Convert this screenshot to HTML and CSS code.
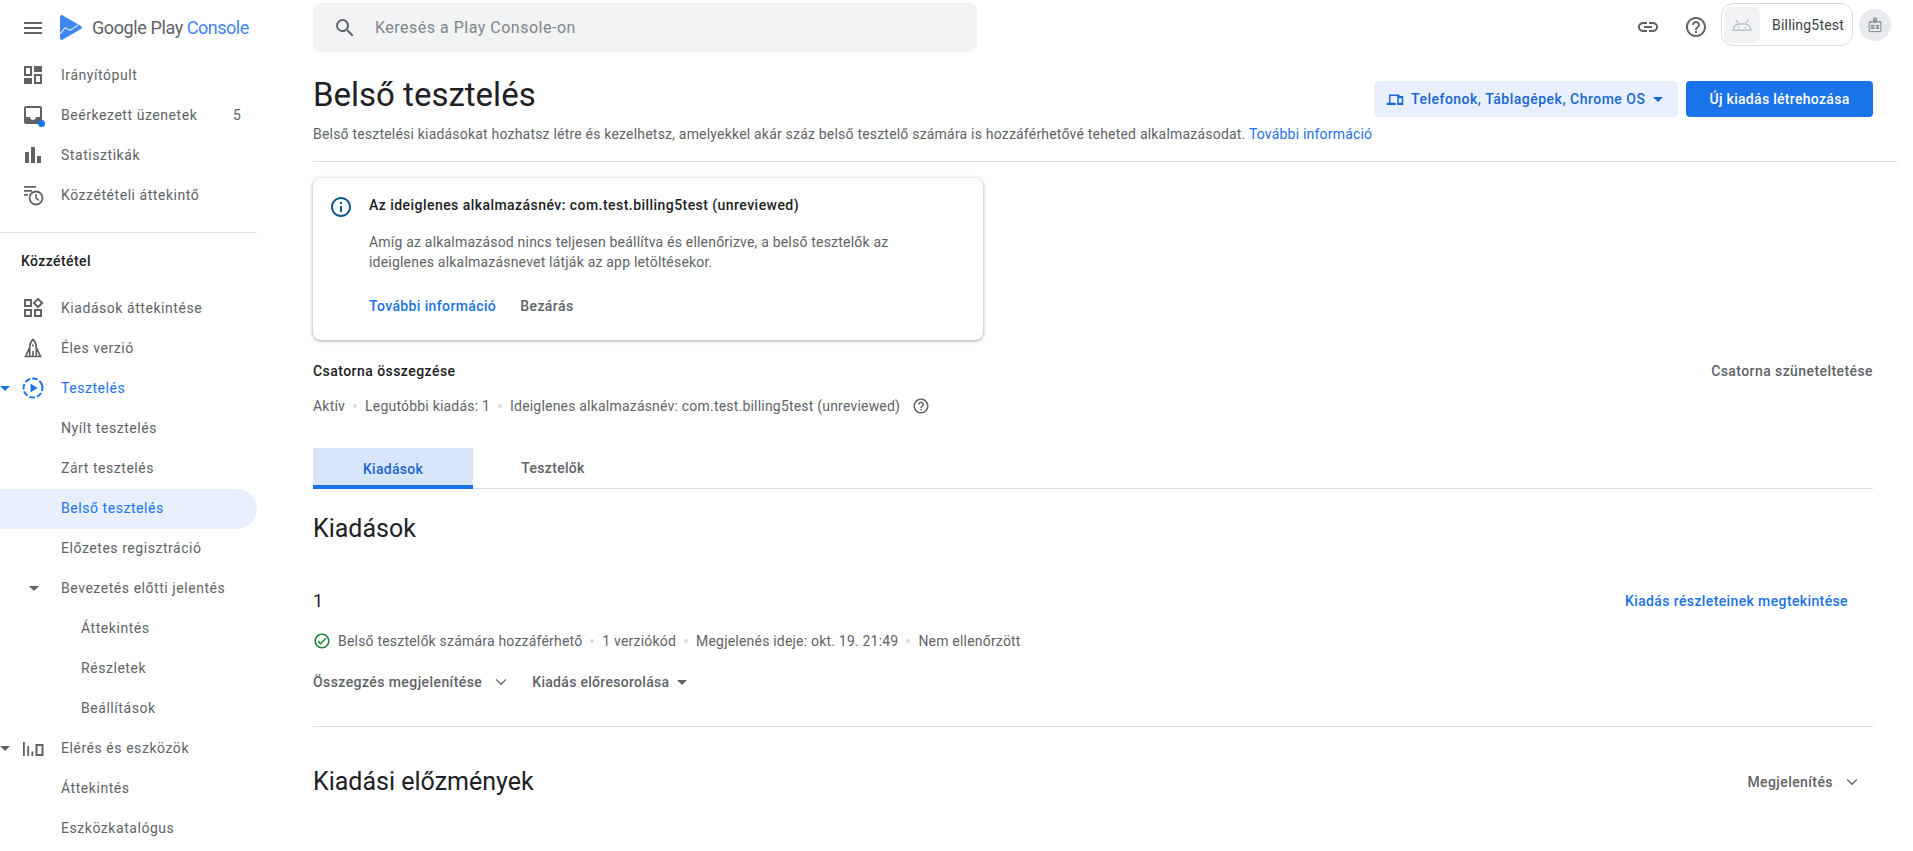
FILE: index.html
```html
<!DOCTYPE html>
<html lang="hu">
<head>
<meta charset="utf-8">
<title>Belső tesztelés</title>
<link rel="stylesheet" href="styles.css">
</head>
<body>
<div class="app">
  <aside class="sidebar">
    <div class="brand">
      <svg class="ic menu-ic" viewBox="0 0 24 24"><path d="M3 18h18v-2H3v2zm0-5h18v-2H3v2zm0-7v2h18V6H3z"/></svg>
      <svg class="play-logo" viewBox="0 0 22 25"><path fill="#3f86f2" d="M0 2C0 .4 1.400-.4 2.800.4L21 11c1.200.7 1.200 2.400 0 3.100L2.800 24.600C1.400 25.400 0 24.600 0 23z"/><path fill="none" stroke="#cfe0fc" stroke-width="1.300" d="M0 19l5-6.300 5 2.600 8.300-5.300"/></svg>
      <span class="brand-text">Google Play <span class="brand-accent">Console</span></span>
    </div>
    <nav>
      <a class="row"><span class="slot"><svg class="ic" viewBox="0 0 24 24"><path fill-rule="evenodd" d="M3 3h8v10H3zM5 5v6h4V5zM13 3h8v6h-8zM3 15h8v6H3zM13 11h8v10h-8zM15 13v6h4v-6z"/></svg></span><span class="lbl">Irányítópult</span></a>
      <a class="row"><span class="slot dotted"><svg class="ic" viewBox="0 0 24 24"><path d="M19 3H5c-1.100 0-2 .9-2 2v14c0 1.100.9 2 2 2h14c1.100 0 2-.9 2-2V5c0-1.100-.9-2-2-2zm0 11h-4c0 1.660-1.340 3-3 3s-3-1.340-3-3H5V5h14z"/></svg><i class="dot"></i></span><span class="lbl">Beérkezett üzenetek</span><span class="count">5</span></a>
      <a class="row"><span class="slot"><svg class="ic" viewBox="0 0 24 24"><path d="M4 9h4v11H4zM10 4h4v16h-4zM16 13h4v7h-4z"/></svg></span><span class="lbl">Statisztikák</span></a>
      <a class="row"><span class="slot"><svg class="ic wide" viewBox="0 0 24 24"><path d="M3 3h12v1.800H3zM3 7h8v1.800H3zM3 11h4v1.800H3z"/><circle cx="15" cy="15" r="6.500" fill="none" stroke="currentColor" stroke-width="1.800"/><path d="M14.300 11h1.500v4l2.700 1.800-.8 1.200-3.400-2.200z"/></svg></span><span class="lbl">Közzétételi áttekintő</span></a>
    </nav>
    <div class="divider"></div>
    <div class="section-title">Közzététel</div>
    <nav>
      <a class="row"><span class="slot"><svg class="ic" viewBox="0 0 24 24"><path fill-rule="evenodd" d="M3 3h8v8H3zM5 5v4h4V5zM3 13h8v8H3zM5 15v4h4v-4zM13 13h8v8h-8zM15 15v4h4v-4zM17 1.500 22.500 7 17 12.500 11.500 7zM17 4.300 14.300 7 17 9.700 19.700 7z"/></svg></span><span class="lbl">Kiadások áttekintése</span></a>
      <a class="row"><span class="slot"><svg class="ic rocket" viewBox="0 0 24 24"><path d="M12 3.500c-2.200 2-3.300 4.800-3.300 8L4.500 20.500h15l-4.200-9c0-3.200-1.100-6-3.300-8zM8.700 11.500v9M15.300 11.500v9M12 15v5.500"/><path d="M12 8.500v2"/></svg></span><span class="lbl">Éles verzió</span></a>
      <a class="row active-parent"><svg class="caret outer" viewBox="0 0 10 5"><path d="M0 0h10L5 5z"/></svg><span class="slot"><svg class="ic big" viewBox="0 0 24 24"><circle cx="12" cy="12" r="9.500" fill="none" stroke="currentColor" stroke-width="2" stroke-dasharray="5.500 2.200" transform="rotate(-15 12 12)"/><path d="M9.500 7.500v9l7-4.500z"/></svg></span><span class="lbl">Tesztelés</span></a>
      <a class="row"><span class="lbl sub">Nyílt tesztelés</span></a>
      <a class="row"><span class="lbl sub">Zárt tesztelés</span></a>
      <a class="row selected"><span class="lbl sub">Belső tesztelés</span></a>
      <a class="row"><span class="lbl sub">Előzetes regisztráció</span></a>
      <a class="row"><svg class="caret inner" viewBox="0 0 10 5"><path d="M0 0h10L5 5z"/></svg><span class="lbl sub">Bevezetés előtti jelentés</span></a>
      <a class="row"><span class="lbl sub2">Áttekintés</span></a>
      <a class="row"><span class="lbl sub2">Részletek</span></a>
      <a class="row"><span class="lbl sub2">Beállítások</span></a>
      <a class="row"><svg class="caret outer" viewBox="0 0 10 5"><path d="M0 0h10L5 5z"/></svg><span class="slot"><svg class="ic big" viewBox="0 0 24 24"><path d="M2 6h1.800v14H2zM6.300 10h1.800v10H6.300zM10.500 15.500h1.800V20h-1.800z"/><path fill-rule="evenodd" d="M14.500 8h8v12h-8zM16.500 10v8h4v-8z"/></svg></span><span class="lbl">Elérés és eszközök</span></a>
      <a class="row"><span class="lbl sub">Áttekintés</span></a>
      <a class="row"><span class="lbl sub">Eszközkatalógus</span></a>
    </nav>
  </aside>

  <main class="main">
    <header class="topbar">
      <div class="search">
        <svg class="ic search-ic" viewBox="0 0 24 24"><path d="M15.500 14h-.79l-.28-.27A6.470 6.470 0 0 0 16 9.500 6.500 6.500 0 1 0 9.500 16c1.610 0 3.090-.59 4.230-1.570l.27.28v.79l5 4.990L20.490 19l-4.990-5zm-6 0C7.010 14 5 11.990 5 9.500S7.010 5 9.500 5 14 7.010 14 9.500 11.990 14 9.500 14z"/></svg>
        <span class="search-text">Keresés a Play Console-on</span>
      </div>
      <div class="top-actions">
        <svg class="ic link-ic" viewBox="0 0 24 24"><path d="M3.900 12c0-1.710 1.390-3.100 3.100-3.100h4V7H7c-2.760 0-5 2.240-5 5s2.240 5 5 5h4v-1.900H7c-1.710 0-3.100-1.390-3.100-3.100zM8 13h8v-2H8v2zm9-6h-4v1.900h4c1.710 0 3.100 1.390 3.100 3.100s-1.390 3.100-3.100 3.100h-4V17h4c2.760 0 5-2.240 5-5s-2.240-5-5-5z"/></svg>
        <svg class="ic help-ic" viewBox="0 0 24 24"><path d="M11 18h2v-2h-2v2zm1-16C6.480 2 2 6.480 2 12s4.480 10 10 10 10-4.480 10-10S17.520 2 12 2zm0 18c-4.410 0-8-3.590-8-8s3.590-8 8-8 8 3.590 8 8-3.590 8-8 8zm0-14c-2.210 0-4 1.790-4 4h2c0-1.100.9-2 2-2s2 .9 2 2c0 2-3 1.750-3 5h2c0-2.250 3-2.500 3-5 0-2.210-1.790-4-4-4z"/></svg>
        <div class="account">
          <span class="avatar"><svg viewBox="0 0 20 12"><path fill="none" stroke="#bdc1c6" stroke-width="1.400" d="M1 11.300h18C18.500 7.200 15 4.800 10 4.800S1.500 7.200 1 11.300zM3.800 .6l2.700 4.700M16.200 .6l-2.700 4.700"/><path fill="#bdc1c6" d="M6 7.700h1.500v1.500H6zM12.500 7.700H14v1.500h-1.500z"/></svg></span>
          <span class="acct-name">Billing5test</span>
        </div>
        <span class="badge"><svg class="ic badge-ic" viewBox="0 0 18 20"><path d="M7 1h4v5h5.500v12.500h-15V6H7zM8.500 2.500v5H9.500v-5zM7 6H1.500M11 6h5.500M4 10.500h4v1H4zM4 13.500h4v1H4zM10.500 10.500h3.500v1h-3.500zM10.500 13.500h3.500v1h-3.500z"/></svg></span>
      </div>
    </header>

    <section class="page-head">
      <div class="head-row">
        <h1>Belső tesztelés</h1>
        <div class="head-btns">
          <button class="btn-soft"><svg class="ic dev-ic" viewBox="0 0 24 24"><path fill-rule="evenodd" d="M4 6h14v2H6v9h7v3H1v-3h3zM15 8h8v12h-8zM17 11v6h4v-6z"/></svg>Telefonok, Táblagépek, Chrome OS<svg class="caret btn-caret" viewBox="0 0 10 5"><path d="M0 0h10L5 5z"/></svg></button>
          <button class="btn-primary">Új kiadás létrehozása</button>
        </div>
      </div>
      <p class="subtitle">Belső tesztelési kiadásokat hozhatsz létre és kezelhetsz, amelyekkel akár száz belső tesztelő számára is hozzáférhetővé teheted alkalmazásodat. <a class="link">További információ</a></p>
    </section>

    <div class="content">
      <div class="card">
        <svg class="ic info-ic" viewBox="0 0 24 24"><path d="M11 7h2v2h-2zm0 4h2v6h-2zm1-9C6.480 2 2 6.480 2 12s4.480 10 10 10 10-4.480 10-10S17.520 2 12 2zm0 18c-4.410 0-8-3.590-8-8s3.590-8 8-8 8 3.590 8 8-3.590 8-8 8z"/></svg>
        <div class="card-body">
          <div class="card-title">Az ideiglenes alkalmazásnév: com.test.billing5test (unreviewed)</div>
          <p class="card-text">Amíg az alkalmazásod nincs teljesen beállítva és ellenőrizve, a belső tesztelők az ideiglenes alkalmazásnevet látják az app letöltésekor.</p>
          <div class="card-actions"><a class="link strong">További információ</a><a class="plain">Bezárás</a></div>
        </div>
      </div>

      <div class="between summary-head">
        <span class="strong-dark">Csatorna összegzése</span>
        <span class="plain">Csatorna szüneteltetése</span>
      </div>
      <div class="meta summary-meta">
        <span>Aktív</span><i class="sep"></i><span>Legutóbbi kiadás: 1</span><i class="sep"></i><span>Ideiglenes alkalmazásnév: com.test.billing5test (unreviewed)</span>
        <svg class="ic q-ic" viewBox="0 0 24 24"><path d="M11 18h2v-2h-2v2zm1-16C6.480 2 2 6.480 2 12s4.480 10 10 10 10-4.480 10-10S17.520 2 12 2zm0 18c-4.410 0-8-3.590-8-8s3.590-8 8-8 8 3.590 8 8-3.590 8-8 8zm0-14c-2.210 0-4 1.790-4 4h2c0-1.100.9-2 2-2s2 .9 2 2c0 2-3 1.750-3 5h2c0-2.250 3-2.500 3-5 0-2.210-1.790-4-4-4z"/></svg>
      </div>

      <div class="tabs">
        <span class="tab on">Kiadások</span>
        <span class="tab">Tesztelők</span>
      </div>

      <h2 class="h-releases">Kiadások</h2>

      <div class="between rel-head">
        <span class="rel-num">1</span>
        <a class="link strong rel-link">Kiadás részleteinek megtekintése</a>
      </div>
      <div class="meta rel-meta">
        <svg class="ic ok-ic" viewBox="0 0 24 24"><path d="M12 2C6.480 2 2 6.480 2 12s4.480 10 10 10 10-4.480 10-10S17.520 2 12 2zm0 18c-4.410 0-8-3.590-8-8s3.590-8 8-8 8 3.590 8 8-3.590 8-8 8zm4.590-12.420L10 14.170l-2.590-2.580L6 13l4 4 8-8z"/></svg>
        <span>Belső tesztelők számára hozzáférhető</span><i class="sep"></i><span>1 verziókód</span><i class="sep"></i><span>Megjelenés ideje: okt. 19. 21:49</span><i class="sep"></i><span>Nem ellenőrzött</span>
      </div>
      <div class="rel-actions">
        <span class="plain act">Összegzés megjelenítése<svg class="ic chev" viewBox="0 0 24 24"><path d="M6.700 8.300 12 13.600l5.300-5.300 1.100 1.100L12 15.800 5.600 9.400z"/></svg></span>
        <span class="plain act tight">Kiadás előresorolása<svg class="caret act-caret" viewBox="0 0 10 5"><path d="M0 0h10L5 5z"/></svg></span>
      </div>

      <div class="rule"></div>

      <div class="between hist-head">
        <h2>Kiadási előzmények</h2>
        <span class="plain act hist-act">Megjelenítés<svg class="ic chev" viewBox="0 0 24 24"><path d="M6.700 8.300 12 13.600l5.300-5.300 1.100 1.100L12 15.800 5.600 9.400z"/></svg></span>
      </div>
    </div>
  </main>
</div>
</body>
</html>
```
FILE: styles.css
```css
* { box-sizing: border-box; }
html, body { margin: 0; height: 100%; overflow: hidden; }
body {
  font-family: Roboto, "Liberation Sans", sans-serif;
  font-size: 14px;
  line-height: 20px;
  letter-spacing: .2px;
  color: #5f6368;
  background: #fff;
}
.app { display: flex; height: 851px; overflow: hidden; }
a { color: inherit; text-decoration: none; }
p, h1, h2 { margin: 0; }

.ic { width: 24px; height: 24px; fill: currentColor; flex: none; display: block; }
.caret { fill: currentColor; display: block; flex: none; }

/* Sidebar */
.sidebar { width: 257px; flex: none; letter-spacing: .55px; }
.brand { height: 55px; display: flex; align-items: center; padding: 0 0 0 21px; }
.menu-ic { color: #5f6368; }
.play-logo { width: 22px; height: 25px; margin-left: 15px; }
.brand-text { margin-left: 9px; padding-left: 1px; font: 400 18px Roboto, sans-serif; letter-spacing: -.4px; color: #5f6368; white-space: nowrap; }
.brand-accent { color: #4285f4; letter-spacing: -.5px; }
.row { position: relative; display: flex; align-items: center; height: 40px; padding-left: 21px; white-space: nowrap; }
.section-title + nav .row { padding-bottom: 2px; }
.slot { position: relative; width: 24px; height: 24px; flex: none; margin-right: 16px; }
.lbl { font-weight: 440; }
.lbl.sub { margin-left: 40px; }
.lbl.sub2 { margin-left: 60px; }
.count { position: absolute; left: 233px; font-weight: 440; }
.dot { position: absolute; left: 17px; top: 17px; width: 7px; height: 7px; border-radius: 50%; background: #1a73e8; }
.wide { margin-left: 0; }
.big { width: 24px; height: 24px; }
.rocket { fill: none; stroke: currentColor; stroke-width: 1.700; }
.caret.outer { position: absolute; left: 0; top: 17px; width: 10px; height: 5px; }
.caret.inner { position: absolute; left: 29px; top: 17px; width: 10px; height: 5px; }
.active-parent { color: #1a73e8; }
.selected { color: #1a73e8; background: #e8f0fd; border-radius: 0 20px 20px 0; }
.divider { height: 1px; background: #e3e4e6; margin-top: 17px; }
.section-title { height: 56px; padding: 0 0 1px 21px; display: flex; align-items: center; color: #202124; font-weight: 460; letter-spacing: .4px; }

/* Main */
.main { flex: 1; min-width: 0; padding-left: 56px; }
.topbar { height: 55px; display: flex; align-items: flex-start; justify-content: space-between; padding-top: 3px; }
.search { width: 664px; height: 49px; background: #f1f3f4; border-radius: 8px; display: flex; align-items: center; padding-left: 20px; color: #80868b; }
.search-ic { color: #5f6368; }
.search-text { margin-left: 18px; font-size: 16px; letter-spacing: .5px; }
.top-actions { display: flex; align-items: flex-start; padding-right: 22px; }
.link-ic { margin: 12px 24px 0 0; }
.help-ic { margin: 12px 13px 0 0; }
.account { width: 132px; height: 43px; border: 1px solid #dadce0; border-radius: 12px; display: flex; align-items: center; padding-left: 2px; }
.avatar { width: 36px; height: 36px; border-radius: 6px; background: #f1f3f4; display: flex; align-items: center; justify-content: center; }
.avatar svg { width: 20px; height: 12px; }
.acct-name { margin-left: 12px; color: #3c4043; }
.badge { width: 32px; height: 32px; margin: 6px 0 0 6px; border-radius: 50%; background: #e8eaed; display: flex; align-items: center; justify-content: center; color: #80868b; }
.badge-ic { width: 14px; height: 16px; fill: none; stroke: currentColor; stroke-width: 1.200; }

.page-head { height: 107px; border-bottom: 1px solid #dadce0; margin-right: 16px; }
.head-row { display: flex; justify-content: space-between; align-items: flex-start; padding-right: 24px; height: 69px; }
h1 { font-size: 33px; line-height: 40px; font-weight: 400; color: #202124; margin-top: 20px; letter-spacing: 0; }
.head-btns { display: flex; gap: 8px; margin-top: 26px; }
.btn-soft, .btn-primary { height: 36px; border: 0; border-radius: 4px; font: 460 14px/20px Roboto, sans-serif; letter-spacing: .3px; display: flex; align-items: center; }
.btn-soft { width: 304px; background: #e8f0fd; color: #1967d2; padding-left: 12px; letter-spacing: .5px; }
.dev-ic { width: 18px; height: 18px; margin-right: 7px; }
.btn-caret { width: 10px; height: 5px; margin-left: 8px; }
.btn-primary { width: 187px; background: #1a73e8; color: #fff; justify-content: center; }
.subtitle { font-size: 14px; line-height: 20px; margin-top: 0; }
.link { color: #1a73e8; }
.strong { font-weight: 460; letter-spacing: .38px; }

.content { padding-right: 40px; }
.card { width: 670px; height: 162px; margin-top: 16px; background: #fff; border-radius: 8px; box-shadow: 0 1px 3px rgba(60,64,67,.3), 0 1px 4px 1px rgba(60,64,67,.15); display: flex; padding: 17px 0 0 16px; }
.info-ic { color: #0b5a8f; margin-right: 16px; }
.card-title { color: #202124; font-weight: 460; line-height: 20px; margin-top: 0; letter-spacing: .45px; }
.card-body { width: 560px; }
.card-text { margin-top: 17px; }
.card-actions { display: flex; gap: 24px; margin-top: 24px; }
.plain { color: #5f6368; font-weight: 460; letter-spacing: .42px; }
.between { display: flex; justify-content: space-between; align-items: center; }
.summary-head { margin-top: 21px; height: 20px; }
.strong-dark { color: #202124; font-weight: 460; letter-spacing: .45px; }
.meta { display: flex; align-items: center; height: 20px; }
.sep { width: 4px; height: 4px; border-radius: 50%; background: #dadce0; margin: 0 8px; }
.summary-meta { margin-top: 15px; }
.q-ic { width: 18px; height: 18px; margin-left: 12px; }
.tabs { display: flex; margin-top: 32px; height: 41px; border-bottom: 1px solid #dadce0; }
.tab { width: 160px; height: 40px; display: flex; align-items: center; justify-content: center; font-weight: 460; letter-spacing: .3px; }
.tab.on { height: 41px; padding-top: 4px; background: #d9e5f8; color: #1967d2; border-bottom: 4px solid #1a73e8; }
h2 { font-size: 25px; line-height: 32px; font-weight: 400; color: #202124; letter-spacing: 0; }
.h-releases { margin-top: 24px; }
.rel-head { margin-top: 44px; height: 24px; padding-right: 25px; }
.rel-num { font-size: 18px; color: #202124; }
.rel-meta { margin-top: 18px; }
.ok-ic { width: 18px; height: 18px; color: #188038; margin-right: 7px; }
.rel-actions { display: flex; gap: 21px; margin-top: 21px; height: 20px; }
.act { display: flex; align-items: center; }
.tight { letter-spacing: .3px; }
.chev { width: 20px; height: 20px; margin-left: 9px; }
.act-caret { width: 10px; height: 5px; margin-left: 8px; }
.rule { height: 1px; background: #dadce0; margin-top: 34px; }
.hist-head { margin-top: 39px; height: 32px; }
.hist-act { margin-right: 11px; }
```
